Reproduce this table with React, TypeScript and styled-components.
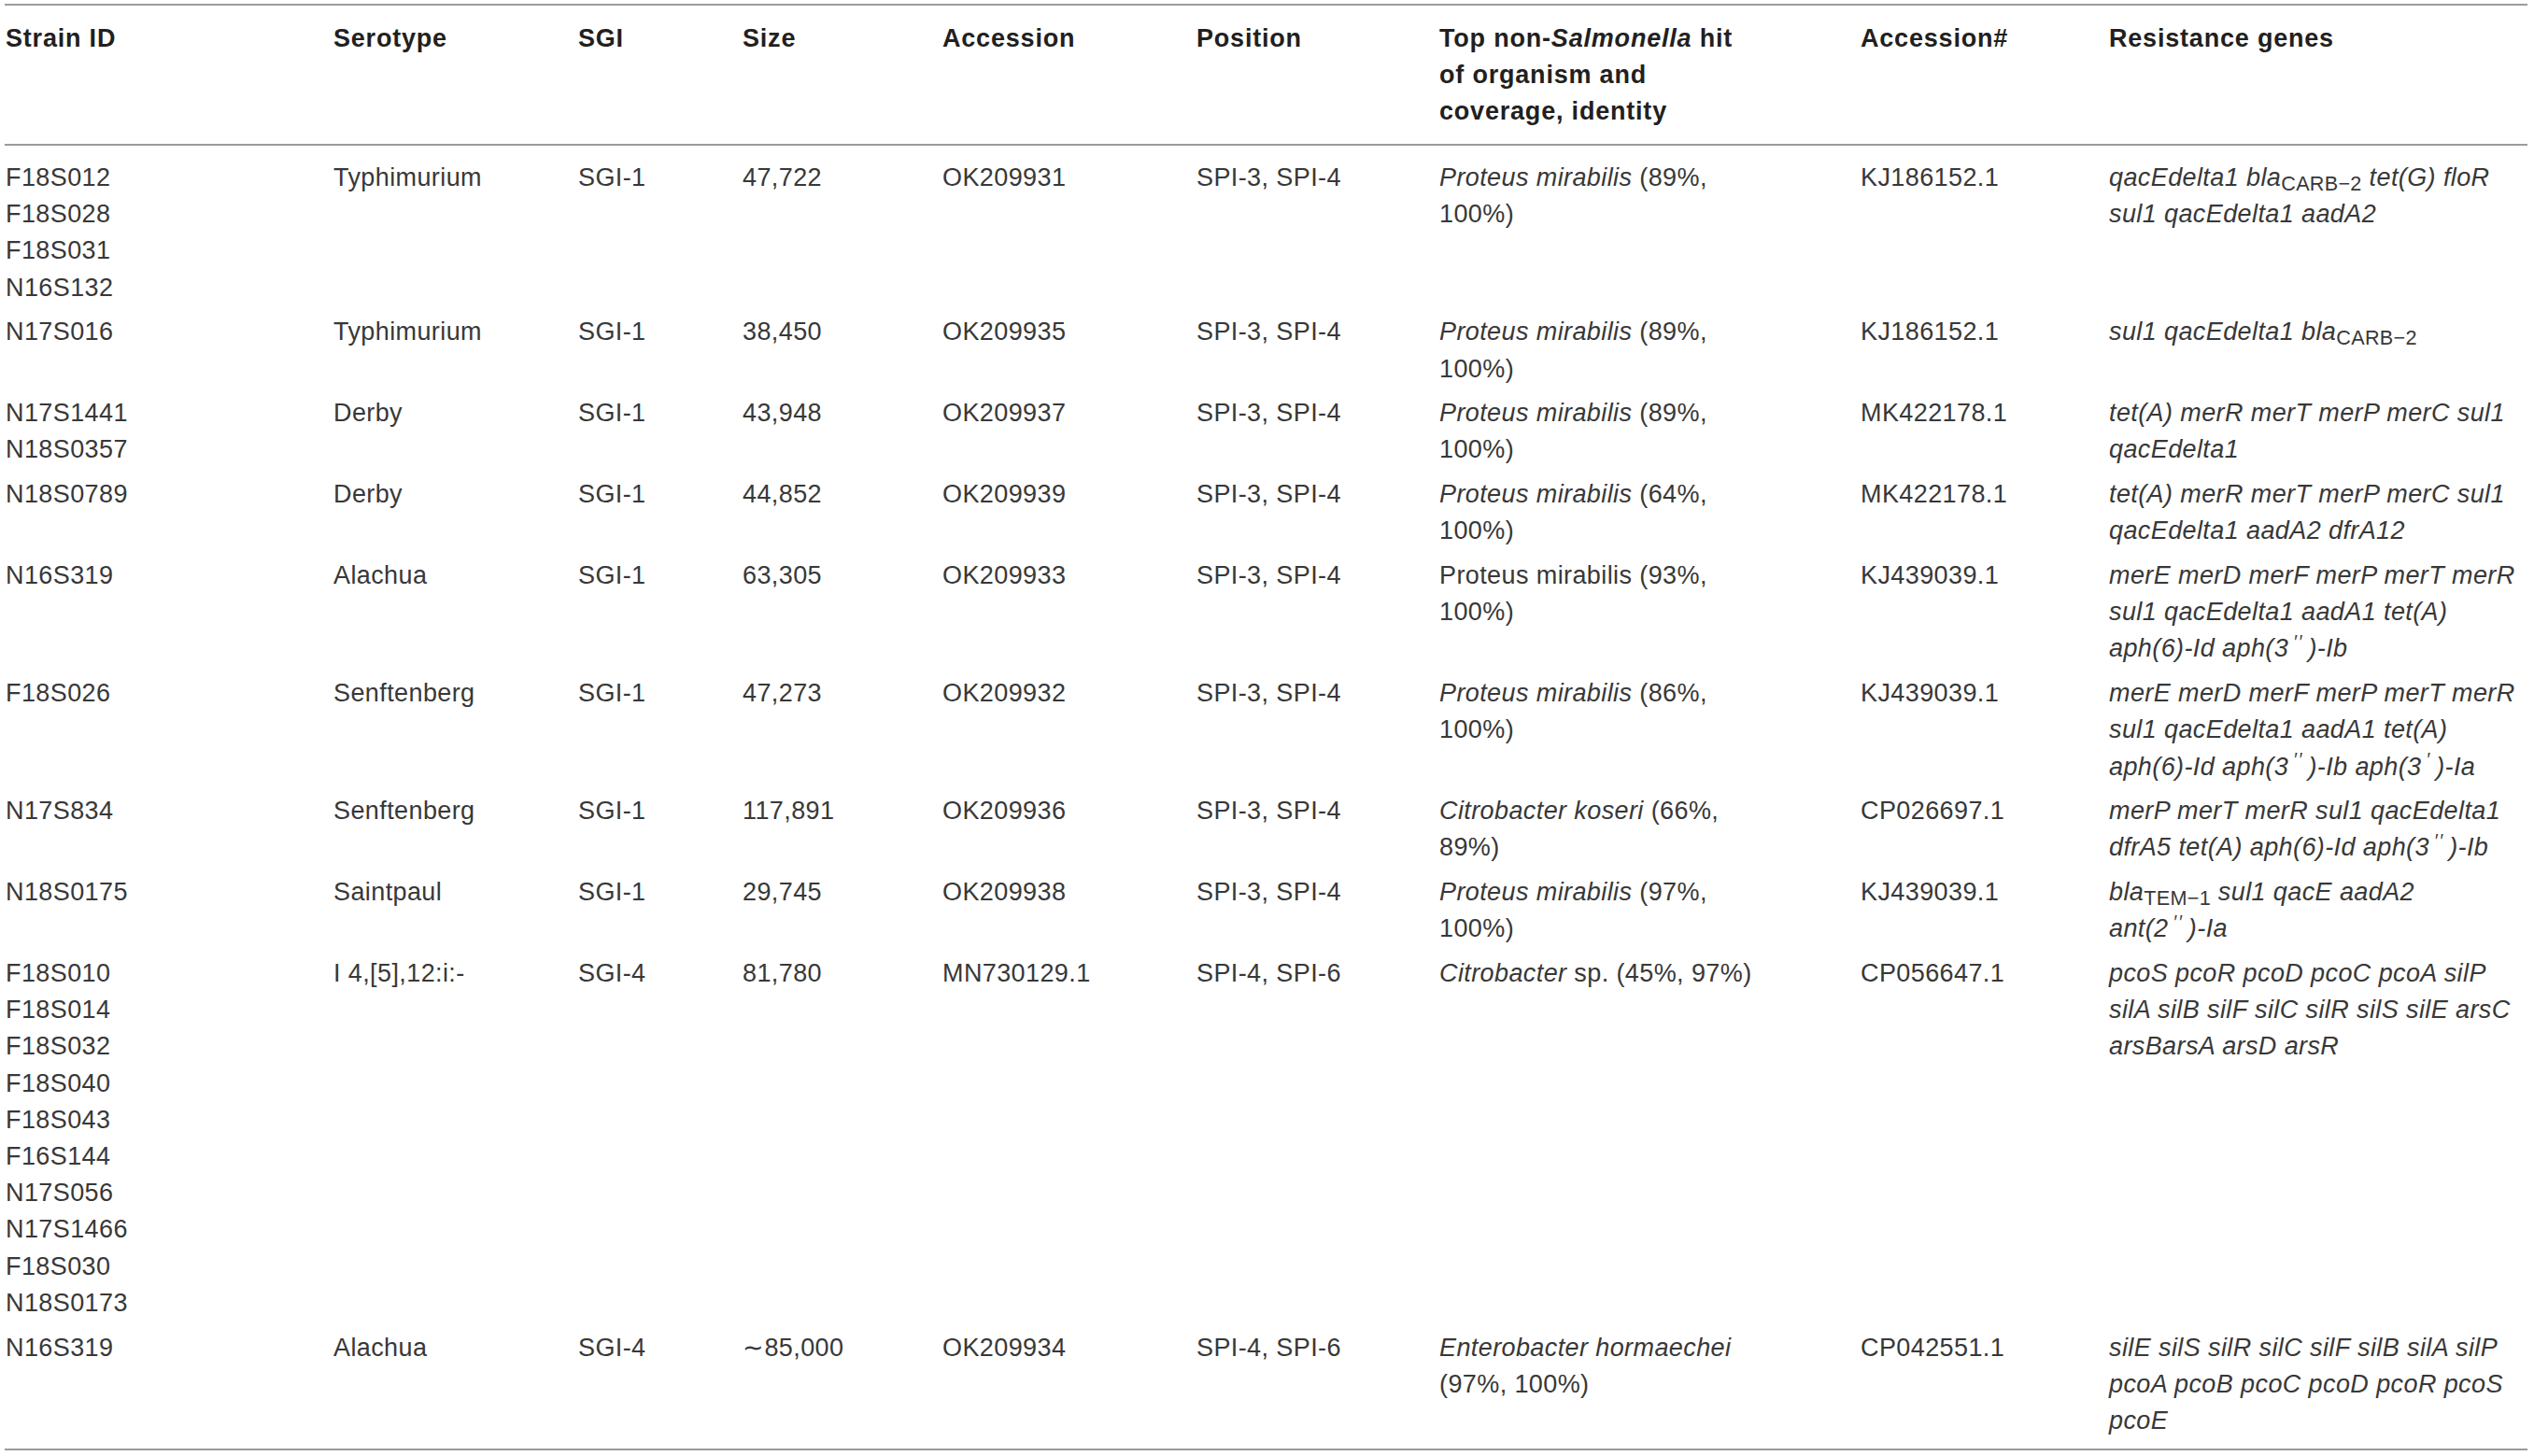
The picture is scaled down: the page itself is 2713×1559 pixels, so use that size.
import React from 'react';
import styled, { createGlobalStyle } from 'styled-components';

const GlobalStyle = createGlobalStyle`
  html, body {
    margin: 0;
    padding: 0;
    background: #ffffff;
  }
  body {
    font-family: "Liberation Sans", Arial, Helvetica, sans-serif;
    color: #383838;
  }
`;

const RULE = '#9b9b9b';

const Table = styled.table`
  margin: 4px 0 0 5px;
  width: 2701px;
  table-layout: fixed;
  border-collapse: separate;
  border-spacing: 0;
  font-size: 27px;
  line-height: 39.2px;
`;

const HeadCell = styled.th`
  padding: 16px 0 14.4px 1px;
  border-top: 2px solid ${RULE};
  border-bottom: 2px solid ${RULE};
  text-align: left;
  vertical-align: top;
  font-weight: 700;
  letter-spacing: 0.8px;
  color: #231f20;
`;

const BodyRow = styled.tr<{ $first?: boolean; $last?: boolean }>`
  & > td {
    padding-top: ${({ $first }) => ($first ? '15px' : '4px')};
    padding-bottom: ${({ $last }) => ($last ? '9.4px' : '4.5px')};
    border-bottom: ${({ $last }) => ($last ? `2px solid ${RULE}` : 'none')};
  }
`;

const Cell = styled.td`
  padding-left: 1px;
  padding-right: 0;
  vertical-align: top;
  text-align: left;
  font-weight: 400;
  letter-spacing: 0.4px;
  color: #383838;
`;

const Line = styled.span`
  display: block;
  white-space: nowrap;
`;

const Em = styled.em`
  font-style: italic;
`;

const Sub = styled.sub`
  font-style: normal;
  font-size: 0.8em;
  line-height: 0;
  vertical-align: -0.22em;
  letter-spacing: 0.3px;
`;

const Prime = styled.sup`
  font-size: 0.72em;
  line-height: 0;
  vertical-align: 0.5em;
  margin: 0 5px 0 5px;
  letter-spacing: 2px;
`;

type Lines = React.ReactNode[];

interface Row {
  strains: string[];
  serotype: string;
  sgi: string;
  size: string;
  accession: string;
  position: string;
  hit: Lines;
  hitAccession: string;
  genes: Lines;
}

const columns = [351, 262, 176, 214, 272, 260, 451, 266, 449];

const proteus = (pct: string, italic = true): Lines => [
  <>{italic ? <Em>Proteus mirabilis</Em> : 'Proteus mirabilis'} ({pct}%,</>,
  '100%)',
];

const rows: Row[] = [
  {
    strains: ['F18S012', 'F18S028', 'F18S031', 'N16S132'],
    serotype: 'Typhimurium',
    sgi: 'SGI-1',
    size: '47,722',
    accession: 'OK209931',
    position: 'SPI-3, SPI-4',
    hit: proteus('89'),
    hitAccession: 'KJ186152.1',
    genes: [
      <Em>qacEdelta1 bla<Sub>CARB−2</Sub> tet(G) floR</Em>,
      <Em>sul1 qacEdelta1 aadA2</Em>,
    ],
  },
  {
    strains: ['N17S016'],
    serotype: 'Typhimurium',
    sgi: 'SGI-1',
    size: '38,450',
    accession: 'OK209935',
    position: 'SPI-3, SPI-4',
    hit: proteus('89'),
    hitAccession: 'KJ186152.1',
    genes: [<Em>sul1 qacEdelta1 bla<Sub>CARB−2</Sub></Em>],
  },
  {
    strains: ['N17S1441', 'N18S0357'],
    serotype: 'Derby',
    sgi: 'SGI-1',
    size: '43,948',
    accession: 'OK209937',
    position: 'SPI-3, SPI-4',
    hit: proteus('89'),
    hitAccession: 'MK422178.1',
    genes: [
      <Em>tet(A) merR merT merP merC sul1</Em>,
      <Em>qacEdelta1</Em>,
    ],
  },
  {
    strains: ['N18S0789'],
    serotype: 'Derby',
    sgi: 'SGI-1',
    size: '44,852',
    accession: 'OK209939',
    position: 'SPI-3, SPI-4',
    hit: proteus('64'),
    hitAccession: 'MK422178.1',
    genes: [
      <Em>tet(A) merR merT merP merC sul1</Em>,
      <Em>qacEdelta1 aadA2 dfrA12</Em>,
    ],
  },
  {
    strains: ['N16S319'],
    serotype: 'Alachua',
    sgi: 'SGI-1',
    size: '63,305',
    accession: 'OK209933',
    position: 'SPI-3, SPI-4',
    hit: proteus('93', false),
    hitAccession: 'KJ439039.1',
    genes: [
      <Em>merE merD merF merP merT merR</Em>,
      <Em>sul1 qacEdelta1 aadA1 tet(A)</Em>,
      <Em>aph(6)-Id aph(3<Prime>′′</Prime>)-Ib</Em>,
    ],
  },
  {
    strains: ['F18S026'],
    serotype: 'Senftenberg',
    sgi: 'SGI-1',
    size: '47,273',
    accession: 'OK209932',
    position: 'SPI-3, SPI-4',
    hit: proteus('86'),
    hitAccession: 'KJ439039.1',
    genes: [
      <Em>merE merD merF merP merT merR</Em>,
      <Em>sul1 qacEdelta1 aadA1 tet(A)</Em>,
      <Em>aph(6)-Id aph(3<Prime>′′</Prime>)-Ib aph(3<Prime>′</Prime>)-Ia</Em>,
    ],
  },
  {
    strains: ['N17S834'],
    serotype: 'Senftenberg',
    sgi: 'SGI-1',
    size: '117,891',
    accession: 'OK209936',
    position: 'SPI-3, SPI-4',
    hit: [<><Em>Citrobacter koseri</Em> (66%,</>, '89%)'],
    hitAccession: 'CP026697.1',
    genes: [
      <Em>merP merT merR sul1 qacEdelta1</Em>,
      <Em>dfrA5 tet(A) aph(6)-Id aph(3<Prime>′′</Prime>)-Ib</Em>,
    ],
  },
  {
    strains: ['N18S0175'],
    serotype: 'Saintpaul',
    sgi: 'SGI-1',
    size: '29,745',
    accession: 'OK209938',
    position: 'SPI-3, SPI-4',
    hit: proteus('97'),
    hitAccession: 'KJ439039.1',
    genes: [
      <Em>bla<Sub>TEM−1</Sub> sul1 qacE aadA2</Em>,
      <Em>ant(2<Prime>′′</Prime>)-Ia</Em>,
    ],
  },
  {
    strains: [
      'F18S010', 'F18S014', 'F18S032', 'F18S040', 'F18S043',
      'F16S144', 'N17S056', 'N17S1466', 'F18S030', 'N18S0173',
    ],
    serotype: 'I 4,[5],12:i:-',
    sgi: 'SGI-4',
    size: '81,780',
    accession: 'MN730129.1',
    position: 'SPI-4, SPI-6',
    hit: [<><Em>Citrobacter</Em> sp. (45%, 97%)</>],
    hitAccession: 'CP056647.1',
    genes: [
      <Em>pcoS pcoR pcoD pcoC pcoA silP</Em>,
      <Em>silA silB silF silC silR silS silE arsC</Em>,
      <Em>arsBarsA arsD arsR</Em>,
    ],
  },
  {
    strains: ['N16S319'],
    serotype: 'Alachua',
    sgi: 'SGI-4',
    size: '∼85,000',
    accession: 'OK209934',
    position: 'SPI-4, SPI-6',
    hit: [<Em>Enterobacter hormaechei</Em>, '(97%, 100%)'],
    hitAccession: 'CP042551.1',
    genes: [
      <Em>silE silS silR silC silF silB silA silP</Em>,
      <Em>pcoA pcoB pcoC pcoD pcoR pcoS</Em>,
      <Em>pcoE</Em>,
    ],
  },
];

const headers: Lines[] = [
  ['Strain ID'],
  ['Serotype'],
  ['SGI'],
  ['Size'],
  ['Accession'],
  ['Position'],
  [<>Top non-<Em>Salmonella</Em> hit</>, 'of organism and', 'coverage, identity'],
  ['Accession#'],
  ['Resistance genes'],
];

const renderLines = (lines: Lines) => lines.map((line, i) => (
  // eslint-disable-next-line react/no-array-index-key
  <Line key={i}>{line}</Line>
));

const App = () => (
  <>
    <GlobalStyle />
    <Table>
      <colgroup>
        {columns.map((w, i) => (
          // eslint-disable-next-line react/no-array-index-key
          <col key={i} style={{ width: w }} />
        ))}
      </colgroup>
      <thead>
        <tr>
          {headers.map((h, i) => (
            // eslint-disable-next-line react/no-array-index-key
            <HeadCell key={i}>{renderLines(h)}</HeadCell>
          ))}
        </tr>
      </thead>
      <tbody>
        {rows.map((row, i) => (
          <BodyRow
            key={`${row.strains[0]}-${row.accession}`}
            $first={i === 0}
            $last={i === rows.length - 1}
          >
            <Cell>{renderLines(row.strains)}</Cell>
            <Cell>{renderLines([row.serotype])}</Cell>
            <Cell>{renderLines([row.sgi])}</Cell>
            <Cell>{renderLines([row.size])}</Cell>
            <Cell>{renderLines([row.accession])}</Cell>
            <Cell>{renderLines([row.position])}</Cell>
            <Cell>{renderLines(row.hit)}</Cell>
            <Cell>{renderLines([row.hitAccession])}</Cell>
            <Cell>{renderLines(row.genes)}</Cell>
          </BodyRow>
        ))}
      </tbody>
    </Table>
  </>
);

export default App;
